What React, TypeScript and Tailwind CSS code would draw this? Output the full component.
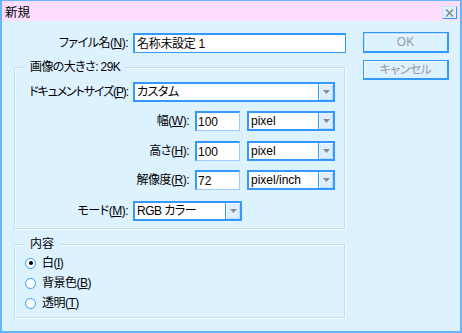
import React from "react";

const U = ({ c }: { c: string }) => (
  <span className="underline underline-offset-[1px] decoration-[1px]">{c}</span>
);

function Arrow() {
  return (
    <div className="w-[15px] h-full border-l border-[#3399FF] bg-[#DCEEFF] shadow-[inset_1px_1px_0_#F4FAFF,inset_-1px_-1px_0_#B8DAFF] flex items-center justify-center">
      <svg width="7" height="4" viewBox="0 0 7 4">
        <path d="M0 0H7L3.5 4Z" fill="#8A8A8A" />
      </svg>
    </div>
  );
}

function Select({ value, cls, jp }: { value: string; cls: string; jp?: boolean }) {
  return (
    <div className={`${cls} h-[20px] border-2 border-[#3399FF] bg-white flex`}>
      <div className={`flex-1 pl-[2px] flex items-center leading-[14px] whitespace-nowrap overflow-hidden ${jp ? "tracking-[-0.5px]" : ""}`}>{value}</div>
      <Arrow />
    </div>
  );
}

function NumInput({ value }: { value: string }) {
  return (
    <div className="w-[45px] h-[20px] ml-[6px] bg-white border-l-2 border-t-2 border-r border-b border-l-[#3399FF] border-t-[#3399FF] border-r-[#9CCCFF] border-b-[#9CCCFF] flex items-center pl-[1px] leading-[14px]">
      {value}
    </div>
  );
}

function Radio({ checked, children }: { checked?: boolean; children: React.ReactNode }) {
  return (
    <div className="h-[20px] flex items-center pl-[10px]">
      <div className="w-[11px] h-[11px] rounded-full border border-[#3399FF] bg-white flex items-center justify-center">
        {checked && <div className="w-[4px] h-[4px] rounded-full bg-black" />}
      </div>
      <div className="ml-[6px] leading-[14px] tracking-[-0.5px]">{children}</div>
    </div>
  );
}

export default function App() {
  return (
    <div className="w-[462px] h-[333px] bg-[#DDF2FF] border-t border-l-2 border-r-2 border-b-2 border-[#66B5FF] flex flex-col text-[12px] text-black font-['Liberation_Sans','Noto_Sans_CJK_JP',sans-serif] [font-feature-settings:'palt']">
      {/* title bar */}
      <div className="h-[20px] bg-[#FFDDFF] flex items-start justify-between pl-[3px] pr-[3px]">
        <div className="mt-[5px] leading-[14px] text-[12.5px]">新規</div>
        <div className="w-[15px] h-[13px] mt-[5px] border border-t-[#C6E3FF] border-l-[#C6E3FF] border-r-[#3399FF] border-b-[#3399FF] bg-[#DDF2FF] flex items-center justify-center">
          <svg width="9" height="8" viewBox="0 0 9 8">
            <path d="M1 0.5L8 7.5M8 0.5L1 7.5" stroke="#8C8C8C" strokeWidth="1.6" />
          </svg>
        </div>
      </div>

      {/* body */}
      <div className="flex pt-[11px] pl-[12px]">
        <div className="w-[332px] pt-[1px] flex flex-col">
          <div className="h-[20px] flex items-center">
            <div className="w-[114px] text-right leading-[14px] whitespace-nowrap tracking-[-0.5px]">
              ファイル名(<U c="N" />):
            </div>
            <div className="ml-[5px] w-[213px] h-[20px] bg-white border-l-2 border-t-2 border-r border-b border-[#3399FF] flex items-center pl-[2px] leading-[14px] tracking-[-0.3px]">
              名称未設定 1
            </div>
          </div>

          <fieldset className="mt-[7px] w-[331px] border border-[#BCE3F5] shadow-[inset_1px_1px_0_#F2FAFF,1px_1px_0_#F2FAFF]">
            <legend className="ml-[10px] px-[5px] leading-[14px] bg-[#DDF2FF] tracking-[-0.6px]">画像の大きさ: 29K</legend>
            <div className="pt-[8px] pb-[7px] flex flex-col">
              <div className="h-[20px] flex items-center">
                <div className="w-[113px] text-right leading-[14px] whitespace-nowrap tracking-[-1.1px]">
                  ドキュメントサイズ(<U c="P" />):
                </div>
                <Select value="カスタム" cls="ml-[5px] w-[202px]" jp />
              </div>
              <div className="mt-[9px] h-[20px] flex items-center">
                <div className="w-[174px] text-right leading-[14px] whitespace-nowrap tracking-[-0.5px]">
                  幅(<U c="W" />):
                </div>
                <NumInput value="100" />
                <Select value="pixel" cls="ml-[7px] w-[88px]" />
              </div>
              <div className="mt-[10px] h-[20px] flex items-center">
                <div className="w-[174px] text-right leading-[14px] whitespace-nowrap tracking-[-0.5px]">
                  高さ(<U c="H" />):
                </div>
                <NumInput value="100" />
                <Select value="pixel" cls="ml-[7px] w-[88px]" />
              </div>
              <div className="mt-[9px] h-[20px] flex items-center">
                <div className="w-[174px] text-right leading-[14px] whitespace-nowrap tracking-[-0.5px]">
                  解像度(<U c="R" />):
                </div>
                <NumInput value="72" />
                <Select value="pixel/inch" cls="ml-[7px] w-[88px]" />
              </div>
              <div className="mt-[11px] h-[20px] flex items-center">
                <div className="w-[113px] text-right leading-[14px] whitespace-nowrap tracking-[-0.5px]">
                  モード(<U c="M" />):
                </div>
                <Select value="RGB カラー" cls="ml-[5px] w-[109px]" jp />
              </div>
            </div>
          </fieldset>

          <fieldset className="mt-[8px] w-[331px] border border-[#BCE3F5] shadow-[inset_1px_1px_0_#F2FAFF,1px_1px_0_#F2FAFF]">
            <legend className="ml-[10px] px-[5px] leading-[14px] bg-[#DDF2FF]">内容</legend>
            <div className="pt-[2px] pb-[4px] flex flex-col">
              <Radio checked>
                白(<U c="I" />)
              </Radio>
              <Radio>
                背景色(<U c="B" />)
              </Radio>
              <Radio>
                透明(<U c="T" />)
              </Radio>
            </div>
          </fieldset>
        </div>

        <div className="ml-[17px] flex flex-col">
          <div className="w-[86px] h-[21px] border border-r-2 border-b-2 border-[#3399FF] shadow-[inset_1px_1px_0_#B8DCFF,inset_2px_2px_0_#F2FAFF] bg-[#DDF2FF] flex items-center justify-center text-[#9A9A9A] leading-[14px]">
            OK
          </div>
          <div className="mt-[7px] w-[86px] h-[20px] border border-r-2 border-b-2 border-[#3399FF] shadow-[inset_1px_1px_0_#F2FAFF] bg-[#DDF2FF] flex items-center justify-center text-[#9A9A9A] leading-[14px] tracking-[-0.5px]">
            キャンセル
          </div>
        </div>
      </div>
    </div>
  );
}
